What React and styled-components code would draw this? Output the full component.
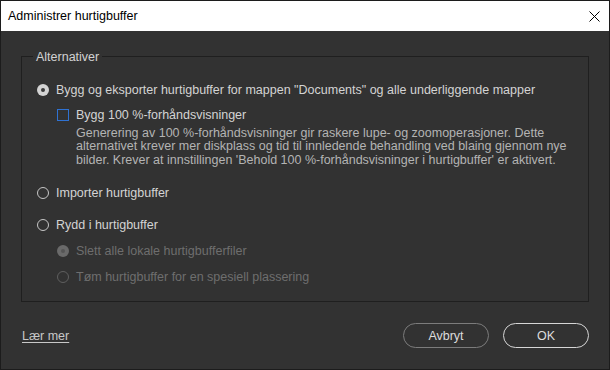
import React from 'react';
import styled, { createGlobalStyle } from 'styled-components';

const GlobalStyle = createGlobalStyle`
    html, body {
        margin: 0;
        padding: 0;
        background: #323232;
    }

    body {
        font-family: "Liberation Sans", Arial, sans-serif;
        font-size: 12.5px;
    }
`;

const Window = styled.div`
    width: 610px;
    height: 370px;
    box-sizing: border-box;
    border: 1px solid #1c1c1c;
    background: #323232;
    display: flex;
    flex-direction: column;
`;

const TitleBar = styled.div`
    height: 30px;
    flex: none;
    background: #ffffff;
    display: flex;
    align-items: center;
    justify-content: space-between;
    padding: 0 8px 0 7px;
    color: #000;
    font-size: 12.5px;
`;

const CloseButton = styled.svg`
    width: 11px;
    height: 11px;
    margin-right: 1px;
`;

const Body = styled.div`
    flex: 1;
    display: flex;
    flex-direction: column;
    padding: 25px 20px 0 20px;
`;

const Group = styled.div`
    position: relative;
    border: 1px solid #1f1f1f;
    padding: 25px 15px 16px 15px;
    display: flex;
    flex-direction: column;
`;

const Legend = styled.span`
    position: absolute;
    top: -8px;
    left: 11px;
    padding: 0 3px;
    line-height: 16px;
    background: #323232;
    color: #d2d2d2;
`;

const Option = styled.label`
    display: flex;
    align-items: center;
    gap: 7px;
    height: 16px;
    line-height: 16px;
    margin-left: ${p => (p.$indent ? '20px' : '0')};
    margin-top: ${p => p.$top || 0}px;
    color: ${p => (p.$disabled ? '#6e6e6e' : '#d4d4d4')};
    white-space: nowrap;
`;

const Radio = styled.span`
    flex: none;
    box-sizing: border-box;
    width: 12px;
    height: 12px;
    border-radius: 50%;
    border: ${p => (p.$checked ? 'none' : `1.5px solid ${p.$disabled ? '#5f5f5f' : '#c6c6c6'}`)};
    background: ${p => (p.$checked ? (p.$disabled ? '#6a6a6a' : '#d3d3d3') : 'transparent')};
    display: flex;
    align-items: center;
    justify-content: center;

    &::after {
        content: "";
        display: ${p => (p.$checked ? 'block' : 'none')};
        width: 4px;
        height: 4px;
        border-radius: 50%;
        background: ${p => (p.$disabled ? '#555555' : '#3a3a3a')};
    }
`;

const Checkbox = styled.span`
    flex: none;
    box-sizing: border-box;
    width: 12px;
    height: 12px;
    border: 1px solid #2f72d2;
`;

const Description = styled.p`
    margin: 4px 0 0 39px;
    line-height: 13.4px;
    color: #b4b4b4;
    white-space: nowrap;
`;

const Footer = styled.div`
    display: flex;
    align-items: center;
    justify-content: space-between;
    padding: 21px 0 20px 1px;
`;

const LearnMore = styled.a`
    color: #c8c8c8;
    text-decoration: underline;
    text-underline-offset: 2px;
    cursor: pointer;
`;

const Buttons = styled.div`
    display: flex;
    gap: 14px;
`;

const Button = styled.button`
    box-sizing: border-box;
    width: 86px;
    height: 25px;
    border-radius: 13px;
    background: transparent;
    border: ${p => (p.$primary ? '1.5px solid #d6d6d6' : '1px solid #7c7c7c')};
    color: #dcdcdc;
    font-family: inherit;
    font-size: 12.5px;
    padding: 0;
`;

export default function App() {
    return (
        <>
            <GlobalStyle />
            <Window>
                <TitleBar>
                    <span>Administrer hurtigbuffer</span>
                    <CloseButton viewBox="0 0 11 11">
                        <path d="M0.5 0.5 L10.5 10.5 M10.5 0.5 L0.5 10.5" stroke="#000" strokeWidth="1" fill="none" />
                    </CloseButton>
                </TitleBar>
                <Body>
                    <Group>
                        <Legend>Alternativer</Legend>
                        <Option>
                            <Radio $checked />
                            Bygg og eksporter hurtigbuffer for mappen "Documents" og alle underliggende mapper
                        </Option>
                        <Option $indent $top={9}>
                            <Checkbox />
                            Bygg 100 %-forhåndsvisninger
                        </Option>
                        <Description>
                            Generering av 100 %-forhåndsvisninger gir raskere lupe- og zoomoperasjoner. Dette<br />
                            alternativet krever mer diskplass og tid til innledende behandling ved blaing gjennom nye<br />
                            bilder. Krever at innstillingen 'Behold 100 %-forhåndsvisninger i hurtigbuffer' er aktivert.
                        </Description>
                        <Option $top={18}>
                            <Radio />
                            Importer hurtigbuffer
                        </Option>
                        <Option $top={16}>
                            <Radio />
                            Rydd i hurtigbuffer
                        </Option>
                        <Option $indent $disabled $top={10}>
                            <Radio $checked $disabled />
                            Slett alle lokale hurtigbufferfiler
                        </Option>
                        <Option $indent $disabled $top={10}>
                            <Radio $disabled />
                            Tøm hurtigbuffer for en spesiell plassering
                        </Option>
                    </Group>
                    <Footer>
                        <LearnMore>Lær mer</LearnMore>
                        <Buttons>
                            <Button>Avbryt</Button>
                            <Button $primary>OK</Button>
                        </Buttons>
                    </Footer>
                </Body>
            </Window>
        </>
    );
}
